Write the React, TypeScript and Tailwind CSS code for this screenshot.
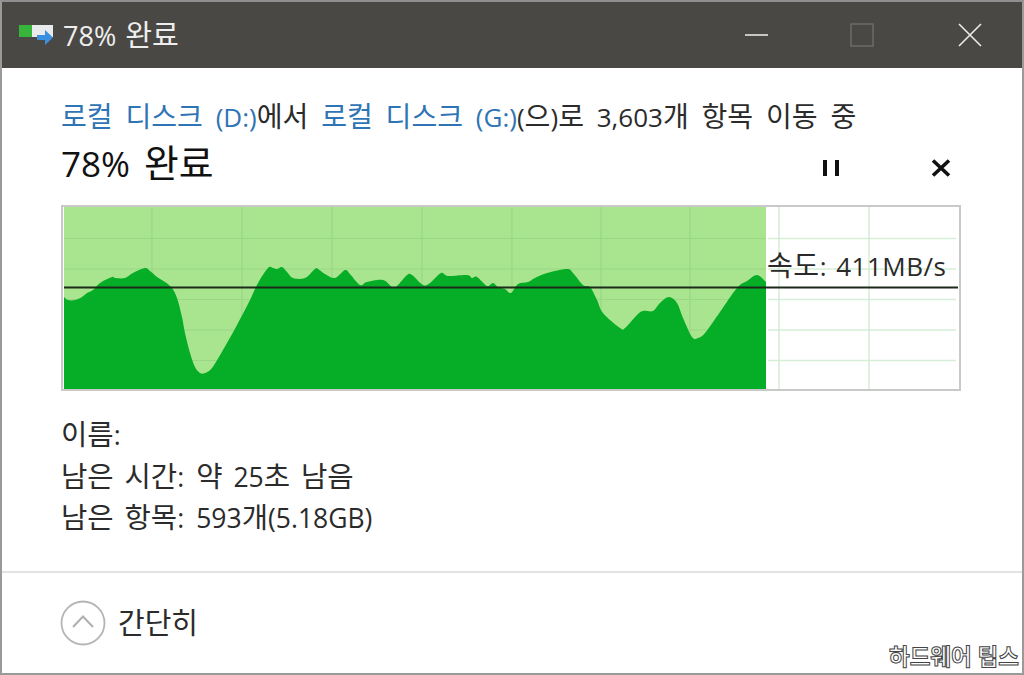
import { Fragment } from "react";

const FONT = "font-['Segoe_UI','Open_Sans','Noto_Sans_CJK_KR',sans-serif]";

const pts: [number, number][] = [[64,297],[68,300],[75,300],[82,297],[87,293],[93,290],[100,283],[112,277],[115,278],[125,278],[133,273],[145,268],[150,271],[157,277],[165,282],[172,288],[177,298],[182,317],[185,333],[190,353],[195,367],[200,373],[205,373],[212,368],[223,350],[237,325],[250,300],[258,283],[268,268],[273,268],[277,269],[282,267],[287,272],[293,278],[305,278],[315,269],[318,269],[325,274],[335,278],[345,270],[350,274],[360,285],[367,282],[383,280],[392,287],[397,286],[407,275],[412,275],[423,285],[430,283],[441,273],[448,276],[467,275],[472,278],[477,277],[487,286],[493,283],[498,287],[505,289],[511,293],[518,284],[528,282],[535,278],[547,273],[567,269],[573,273],[583,285],[590,287],[597,300],[603,313],[620,328],[625,328],[637,315],[643,311],[653,311],[660,303],[669,297],[677,303],[683,318],[692,337],[698,338],[705,333],[720,312],[737,288],[747,281],[757,275],[766,282]];

function areaPath() {
  let d = `M64 389L${pts[0][0]} ${pts[0][1]}`;
  for (let i = 0; i < pts.length - 1; i++) {
    const p0 = pts[Math.max(i - 1, 0)];
    const p1 = pts[i];
    const p2 = pts[i + 1];
    const p3 = pts[Math.min(i + 2, pts.length - 1)];
    const c1x = p1[0] + (p2[0] - p0[0]) / 6;
    const c1y = p1[1] + (p2[1] - p0[1]) / 6;
    const c2x = p2[0] - (p3[0] - p1[0]) / 6;
    const c2y = p2[1] - (p3[1] - p1[1]) / 6;
    d += `C${c1x} ${c1y} ${c2x} ${c2y} ${p2[0]} ${p2[1]}`;
  }
  return d + "L766 389Z";
}

const vLines = [152, 242, 332, 422, 512, 601, 690, 779, 869];
const hLines = [238.5, 269, 299.5, 330, 360.5];

// Hangul runs slightly larger than Latin, as in the original font pairing.
function T({ text }: { text: string }) {
  return (
    <>
      {text.split(/([가-힣]+)/).map((part, i) =>
        /[가-힣]/.test(part) ? (
          <span key={i} className="text-[1.08em] leading-none">{part}</span>
        ) : (
          <Fragment key={i}>{part}</Fragment>
        )
      )}
    </>
  );
}

function Chart() {
  return (
    <div className="relative h-[186px] w-[900px] border-2 border-[#c9c9c9] bg-white">
      <svg width="896" height="182" viewBox="63 207 896 182" className="block">
        <rect x="64" y="207" width="702" height="182" fill="#a9e48f" />
        {hLines.map((y) => (
          <g key={y}>
            <line x1="64" x2="766" y1={y} y2={y} stroke="#9ad888" strokeWidth="1.2" />
            <line x1="768" x2="956" y1={y} y2={y} stroke="#d6eed6" strokeWidth="1.4" />
          </g>
        ))}
        {vLines.map((x) => (
          <line key={x} x1={x} x2={x} y1="207" y2="389" stroke={x < 766 ? "#9ad888" : "#cfeacf"} strokeWidth="1.3" />
        ))}
        <path d={areaPath()} fill="#06ad26" />
        <line x1="64" x2="958" y1="287.5" y2="287.5" stroke="#1c2a1c" strokeWidth="1.8" />
      </svg>
      <span className="absolute left-[704px] top-[41px] text-[26px] leading-[36px] tracking-[0.5px] text-[#2a2a2a] [word-spacing:2px]"><T text="속도: 411MB/s" /></span>
    </div>
  );
}

export default function App() {
  return (
    <div className={`relative flex h-[675px] w-[1024px] flex-col overflow-hidden border-x-2 border-t-2 border-b-2 border-x-[#9a9a9a] border-t-[#8f8f8f] border-b-[#9a9a9a] bg-white ${FONT}`}>
      <div className="flex h-[66px] shrink-0 items-center justify-between bg-[#4a4845]">
        <div className="flex items-center pl-[17px]">
          <svg width="36" height="24" viewBox="0 0 36 24">
            <rect x="0" y="2" width="13" height="12" fill="#36b53a" />
            <rect x="13" y="2" width="21" height="12" fill="#e9eaec" />
            <path d="M18 12h8V7l8 7.5-8 7.5v-5h-8z" fill="#3b8fe0" />
          </svg>
          <span className="ml-[8px] mt-[2px] text-[27px] leading-[36px] text-[#eeeeee] [word-spacing:2px]"><T text="78% 완료" /></span>
        </div>
        <div className="flex items-center pr-[40px]">
          <svg width="24" height="24" viewBox="0 0 24 24" className="mr-[81px]">
            <line x1="0" x2="23" y1="12" y2="12" stroke="#e8e8e8" strokeWidth="1.6" />
          </svg>
          <svg width="24" height="24" viewBox="0 0 24 24" className="mr-[84px]">
            <rect x="1" y="1" width="22" height="22" fill="none" stroke="#6c6b68" strokeWidth="1.5" />
          </svg>
          <svg width="24" height="24" viewBox="0 0 24 24">
            <path d="M1 1L23 23M23 1L1 23" stroke="#ececec" strokeWidth="1.6" />
          </svg>
        </div>
      </div>

      <div className="flex flex-1 flex-col pl-[59px] pr-[61px]">
        <div className="mt-[30px] whitespace-nowrap text-[26px] leading-[38px] text-[#2b2b2b] [word-spacing:6px]">
          <span className="text-[#2f74b5]"><T text="로컬 디스크 (D:)" /></span><T text="에서 " />
          <span className="text-[#2f74b5]"><T text="로컬 디스크 (G:)" /></span><T text="(으)로 3,603개 항목 이동 중" />
        </div>
        <div className="mt-[6px] flex h-[44px] items-center justify-between">
          <span className="text-[35px] leading-[44px] text-[#111111] [word-spacing:5px]"><T text="78% 완료" /></span>
          <div className="mt-[8px] flex items-center pr-[10px]">
            <svg width="16" height="18" viewBox="0 0 16 18" className="mr-[92px]">
              <rect x="0" y="1" width="4" height="16" fill="#111" />
              <rect x="12" y="1" width="4" height="16" fill="#111" />
            </svg>
            <svg width="20" height="18" viewBox="0 0 20 18">
              <path d="M2 1.5L18 16.5M18 1.5L2 16.5" stroke="#111" strokeWidth="3.6" />
            </svg>
          </div>
        </div>
        <div className="mt-[19px]">
          <Chart />
        </div>
        <div className="mt-[24px] flex flex-col text-[26.5px] leading-[41.5px] text-[#2b2b2b]">
          <span><T text="이름:" /></span>
          <div className="flex gap-[12px] [word-spacing:4px]"><span><T text="남은 시간:" /></span><span><T text="약 25초 남음" /></span></div>
          <div className="flex gap-[12px] [word-spacing:4px]"><span><T text="남은 항목:" /></span><span><T text="593개(5.18GB)" /></span></div>
        </div>
      </div>

      <div className="flex h-[102px] shrink-0 items-center border-t-2 border-[#e2e2e2] pl-[58px]">
        <svg width="46" height="46" viewBox="0 0 46 46">
          <circle cx="23" cy="23" r="21.5" fill="none" stroke="#b5b5b5" strokeWidth="1.8" />
          <path d="M13 27L23 16.5L33 27" fill="none" stroke="#b0b0b0" strokeWidth="2" />
        </svg>
        <span className="ml-[12px] text-[29px] leading-[40px] text-[#2b2b2b]">간단히</span>
      </div>

      <span className="absolute bottom-0 right-[3px] whitespace-nowrap text-[22.5px] font-bold leading-[32px] text-white [-webkit-text-stroke:1px_#444444]">하드웨어 팁스</span>
    </div>
  );
}
